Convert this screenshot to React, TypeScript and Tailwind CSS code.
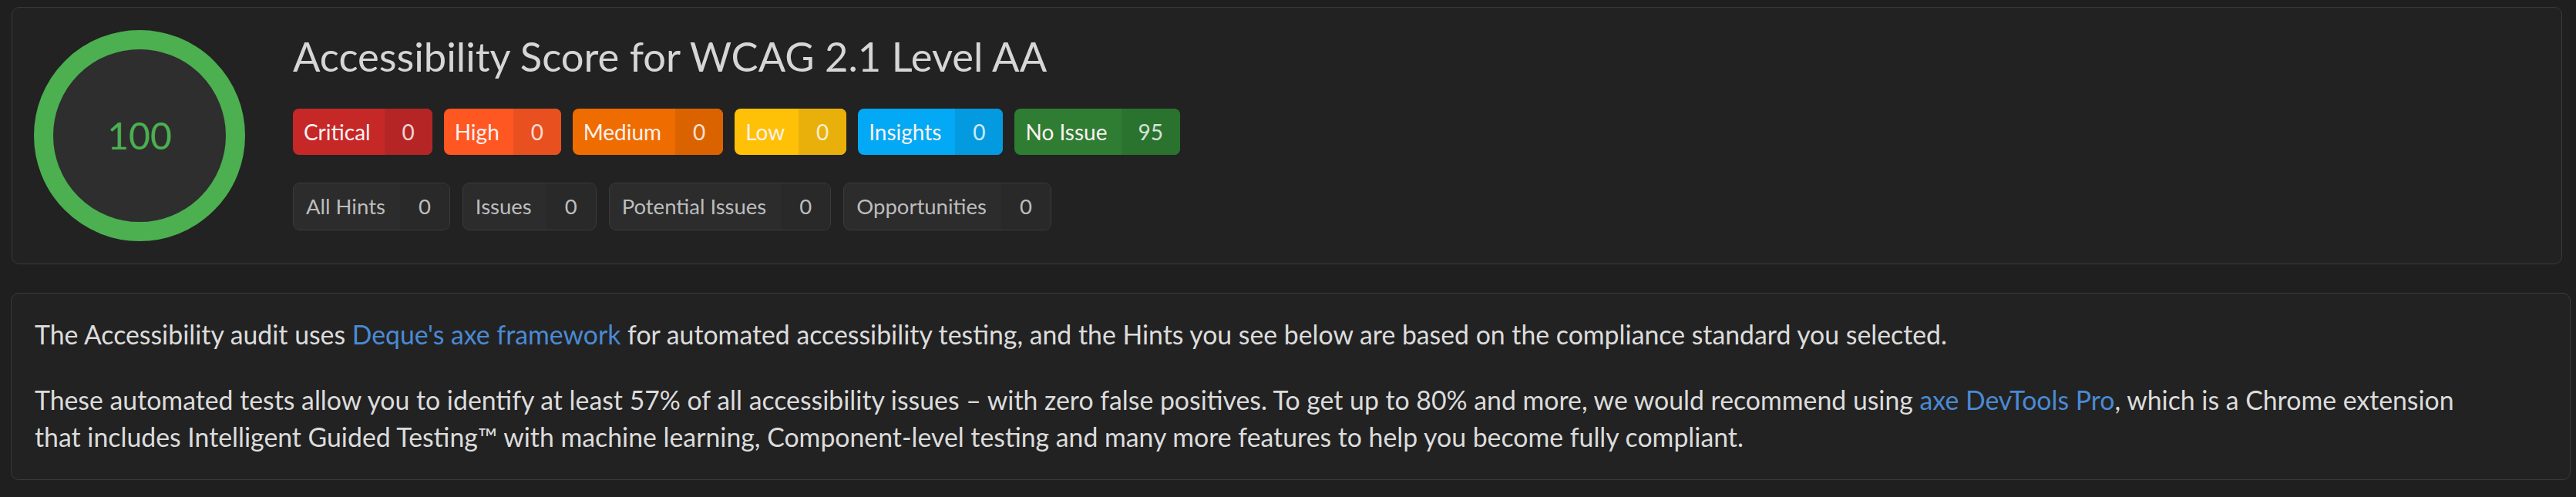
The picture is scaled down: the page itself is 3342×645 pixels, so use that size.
import React from "react";

const severities = [
  { label: "Critical", count: 0, bg: "bg-[#c62828]", countBg: "bg-[#b52525]" },
  { label: "High", count: 0, bg: "bg-[#ff5722]", countBg: "bg-[#e8501f]" },
  { label: "Medium", count: 0, bg: "bg-[#ef6c00]", countBg: "bg-[#da6300]" },
  { label: "Low", count: 0, bg: "bg-[#ffc107]", countBg: "bg-[#e9b00b]" },
  { label: "Insights", count: 0, bg: "bg-[#03a9f4]", countBg: "bg-[#039ae0]" },
  { label: "No Issue", count: 95, bg: "bg-[#2e7d32]", countBg: "bg-[#2a732e]" },
];

const hintTypes = [
  { label: "All Hints", count: 0 },
  { label: "Issues", count: 0 },
  { label: "Potential Issues", count: 0 },
  { label: "Opportunities", count: 0 },
];

function ScoreRing({ score }: { score: number }) {
  return (
    <div className="relative w-[274px] h-[274px] shrink-0">
      <svg width="274" height="274" viewBox="0 0 274 274">
        <circle cx="137" cy="137" r="124.5" fill="#2e2e2e" stroke="#4caf50" strokeWidth="25" />
      </svg>
      <div className="absolute inset-0 flex items-center justify-center text-[48px] text-[#4caf50]">
        {score}
      </div>
    </div>
  );
}

export default function App() {
  return (
    <div className="w-full h-[645px] bg-[#1f1f1f] pt-[9px] font-['Lato',sans-serif]">
      <div className="ml-[15px] mr-[18px] h-[334px] rounded-[10px] border border-[#3a3a3a] bg-[#222222] pl-[28px] pt-[29px] flex items-start">
        <ScoreRing score={100} />
        <div className="ml-[62px] mt-[3px] flex flex-col">
          <h1 className="text-[52.5px] leading-[61px] text-[#d6d6d6]">
            Accessibility Score for WCAG 2.1 Level AA
          </h1>
          <div className="mt-[38px] flex gap-[15px]">
            {severities.map((s) => (
              <div
                key={s.label}
                className={`flex h-[60px] rounded-[8px] overflow-hidden text-[28px] ${s.bg}`}
              >
                <span className="flex items-center pl-[14px] pr-[18px] text-[#fbf1f1]">{s.label}</span>
                <span
                  className={`flex min-w-[62px] items-center justify-center px-[22px] text-white/80 ${s.countBg}`}
                >
                  {s.count}
                </span>
              </div>
            ))}
          </div>
          <div className="mt-[36px] flex gap-[16px]">
            {hintTypes.map((h) => (
              <div
                key={h.label}
                className="flex h-[62px] rounded-[9px] overflow-hidden border border-[#3b3b3b] bg-[#2c2c2c] text-[27.5px] text-[#bdbdbd]"
              >
                <span className="flex items-center pl-[16px] pr-[19px]">{h.label}</span>
                <span className="flex items-center px-[24px] bg-[#292929]">{h.count}</span>
              </div>
            ))}
          </div>
        </div>
      </div>

      <div className="mt-[37px] ml-[14px] mr-[7px] rounded-[10px] border border-[#3a3a3a] bg-[#222222] pl-[30px] pr-[90px] pt-[29px] pb-[31px] text-[33.8px] leading-[48px] text-[#dcdcdc]">
        <p>
          The Accessibility audit uses <a className="text-[#4a8ad4]">Deque's axe framework</a> for
          automated accessibility testing, and the Hints you see below are based on the compliance
          standard you selected.
        </p>
        <p className="mt-[37px]">
          These automated tests allow you to identify at least 57% of all accessibility issues – with
          zero false positives. To get up to 80% and more, we would recommend using{" "}
          <a className="text-[#4a8ad4]">axe DevTools Pro</a>, which is a Chrome extension that
          includes Intelligent Guided Testing™ with machine learning, Component-level testing and
          many more features to help you become fully compliant.
        </p>
      </div>
    </div>
  );
}
